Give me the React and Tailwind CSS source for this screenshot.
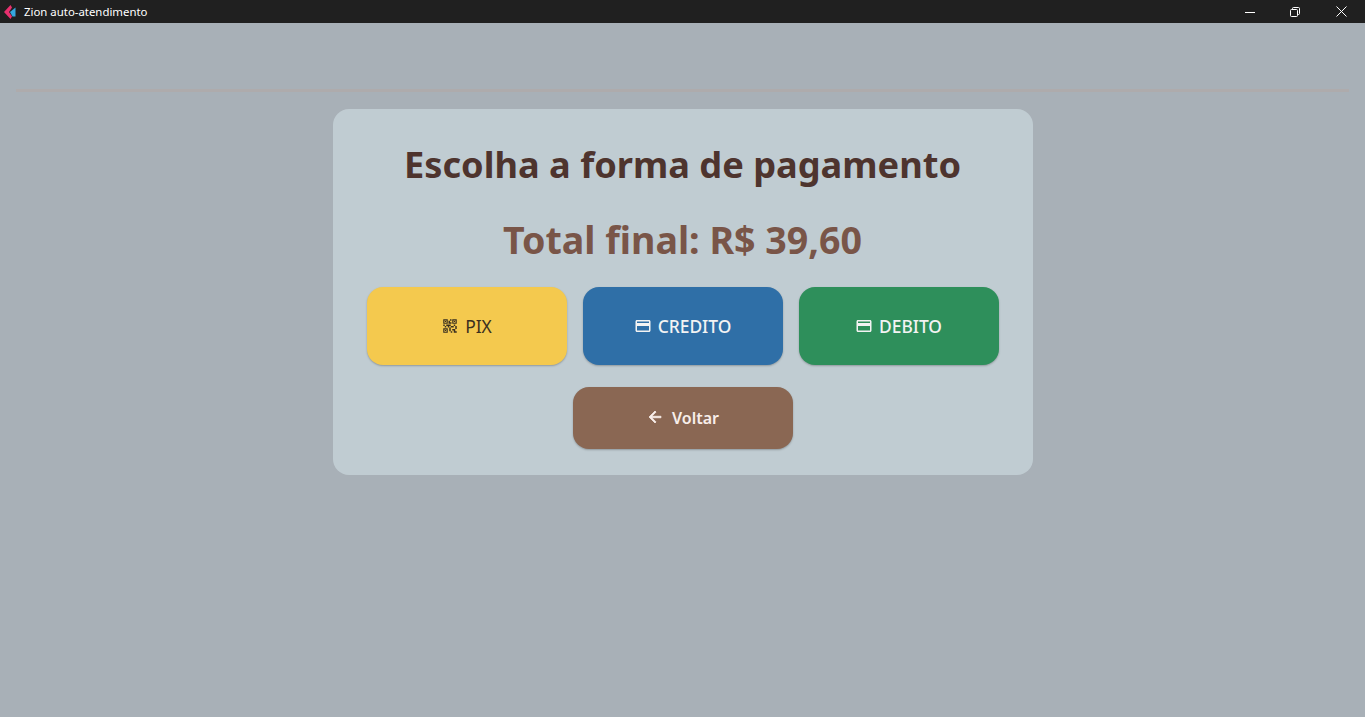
const card = "M20 4H4c-1.11 0-1.99.89-1.99 2L2 18c0 1.11.89 2 2 2h16c1.11 0 2-.89 2-2V6c0-1.11-.89-2-2-2zm0 14H4v-6h16v6zm0-10H4V6h16v2z";
const qr = "M15 21h-2v-2h2v2zM13 14h-2v5h2v-5zM21 12h-2v4h2v-4zM19 10h-2v2h2v-2zM7 12H5v2h2v-2zM5 10H3v2h2v-2zM12 5h2V3h-2v2zM4.5 4.5v3h3v-3h-3zM9 9H3V3h6v6zM4.5 16.5v3h3v-3h-3zM9 21H3v-6h6v6zM16.5 4.5v3h3v-3h-3zM21 9h-6V3h6v6zM19 19v-3h-4v2h2v3h4v-2h-2zM17 12h-4v2h4v-2zM13 10H7v2h2v2h2v-2h2v-2zM14 9V7h-2V5h-2v4h4zM6.75 5.25h-1.5v1.5h1.5v-1.5zM6.75 17.25h-1.5v1.5h1.5v-1.5zM18.75 5.25h-1.5v1.5h1.5v-1.5z";
const arrow = "M20 11H7.83l5.59-5.59L12 4l-8 8 8 8 1.41-1.41L7.83 13H20v-2z";

function Icon({ d, size = 18, className }) {
  return (
    <svg width={size} height={size} viewBox="0 0 24 24" fill="currentColor" className={className} aria-hidden="true">
      <path fillRule="evenodd" d={d} />
    </svg>
  );
}

function TitleBar() {
  return (
    <div className="flex h-[23px] shrink-0 items-center bg-[#202020] text-white">
      <svg width="14" height="16" viewBox="0 0 14 16" className="ml-[3px]" aria-hidden="true">
        <path d="M7.5 1 L1 8 L7.5 15 L9 12.5 L6 8 L9 3.5 Z" fill="#e9306f" />
        <path d="M12.5 3.5 L7 8 L9.5 12.5 L12.5 12.5 Z" fill="#35a7e0" />
      </svg>
      <span className="ml-[7px] text-[11.4px]">Zion auto-atendimento</span>
      <div className="ml-auto flex h-full">
        <div className="flex w-[46px] items-center justify-center">
          <svg width="10" height="10" viewBox="0 0 10 10" aria-hidden="true">
            <path d="M0 5.5H10" stroke="#fff" strokeWidth="1" />
          </svg>
        </div>
        <div className="flex w-[44px] items-center justify-center">
          <svg width="10" height="10" viewBox="0 0 10 10" fill="none" stroke="#fff" strokeWidth="1" aria-hidden="true">
            <rect x="0.5" y="2.5" width="7" height="7" rx="1" />
            <path d="M2.5 2.5V1.5a1 1 0 0 1 1-1h5a1 1 0 0 1 1 1v5a1 1 0 0 1-1 1h-1" />
          </svg>
        </div>
        <div className="flex w-[48px] items-center justify-center">
          <svg width="11" height="11" viewBox="0 0 11 11" aria-hidden="true">
            <path d="M0.5 0.5L10.5 10.5M10.5 0.5L0.5 10.5" stroke="#fff" strokeWidth="1" />
          </svg>
        </div>
      </div>
    </div>
  );
}

function PayButton({ icon, label, className }) {
  return (
    <button className={`flex h-[78px] w-[200px] items-center justify-center gap-[6px] rounded-2xl text-[17.4px] shadow-[0_1px_2px_rgba(0,0,0,0.25)] ${className}`}>
      <Icon d={icon} />
      {label}
    </button>
  );
}

export default function App() {
  return (
    <div className="flex h-[717px] flex-col overflow-hidden bg-[#a8b0b7] font-['Noto_Sans',sans-serif]">
      <TitleBar />
      <div className="mx-4 mt-[66px] h-[3px] bg-[#aeabac]" />
      <div className="mx-auto mt-[17px] flex h-[366px] w-[700px] flex-col items-center rounded-2xl bg-[#c0ccd2] px-[34px]">
        <h1 className="mt-[27px] text-[36.2px] leading-[56px] font-bold text-[#4e342e]">Escolha a forma de pagamento</h1>
        <p className="mt-[20px] text-[37.6px] leading-[56px] font-bold text-[#795548]">Total final: R$ 39,60</p>
        <div className="mt-[19px] flex gap-4">
          <PayButton icon={qr} label="PIX" className="bg-[#f4c94e] text-[#3a3020]" />
          <PayButton icon={card} label="CREDITO" className="bg-[#2f6fa7] font-medium text-[#f3f3f3]" />
          <PayButton icon={card} label="DEBITO" className="bg-[#2e8f5b] font-medium text-[#f3f3f3]" />
        </div>
        <button className="mt-[22px] flex h-[62px] w-[220px] items-center justify-center gap-[8px] rounded-2xl bg-[#8a6753] text-[16px] font-semibold text-[#f8eeea] shadow-[0_1px_2px_rgba(0,0,0,0.25)]">
          <Icon d={arrow} size={18} className="-mt-[2px] stroke-current stroke-1" />
          Voltar
        </button>
      </div>
    </div>
  );
}
